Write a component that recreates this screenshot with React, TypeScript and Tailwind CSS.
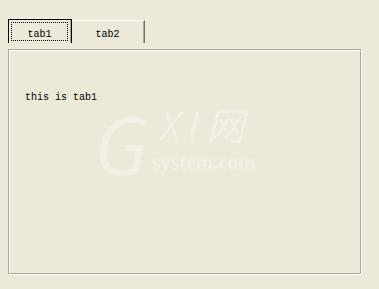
export default function App() {
  return (
    <div
      className="w-[379px] h-[289px] bg-[#ece9d8] pl-[8px] pt-[19px] text-black"
      style={{ fontFamily: '"Liberation Mono", "DejaVu Sans Mono", monospace' }}
    >
      {/* tab strip */}
      <div className="flex items-start h-[24px] text-[10px]">
        <div className="w-[64px] h-[24px] border-t border-l border-r border-black">
          <div className="h-full border-r border-[#aca899] p-[2px]">
            <div className="h-full border border-dotted border-black flex items-center justify-center pt-[5px]">
              tab1
            </div>
          </div>
        </div>
        <div className="w-[73px] h-[23px] mt-[1px] border-t border-white border-r border-r-[#716f64]">
          <div className="h-full border-r border-[#aca899] flex items-center justify-center pt-[5px]">
            tab2
          </div>
        </div>
      </div>

      {/* panel */}
      <div className="mt-[6px] w-[354px] h-[226px] border-t border-l border-[#aca899] border-r border-b border-r-white border-b-white">
        <div className="h-full border-t border-l border-white border-r border-b border-r-[#aca899] border-b-[#aca899] pl-[15px] pt-[41px] text-[10px] leading-[12px]">
          <div>this is tab1</div>

          {/* faint watermark */}
          <div className="flex items-start ml-[69px] text-[#f2f0e6] select-none whitespace-nowrap">
            <div
              className="text-[80px] leading-[80px] italic"
              style={{ fontFamily: '"Open Sans", sans-serif' }}
            >
              G
            </div>
            <div className="flex flex-col gap-[8px] ml-[4px]">
              <div
                className="text-[38px] leading-[38px] italic tracking-[8px] pl-[8px] pt-[2px]"
                style={{ fontFamily: '"Open Sans", "Noto Sans CJK SC", sans-serif' }}
              >
                XI网
              </div>
              <div
                className="text-[21px] leading-[20px] font-bold"
                style={{ fontFamily: '"Liberation Serif", serif' }}
              >
                system.com
              </div>
            </div>
          </div>
        </div>
      </div>
    </div>
  );
}
